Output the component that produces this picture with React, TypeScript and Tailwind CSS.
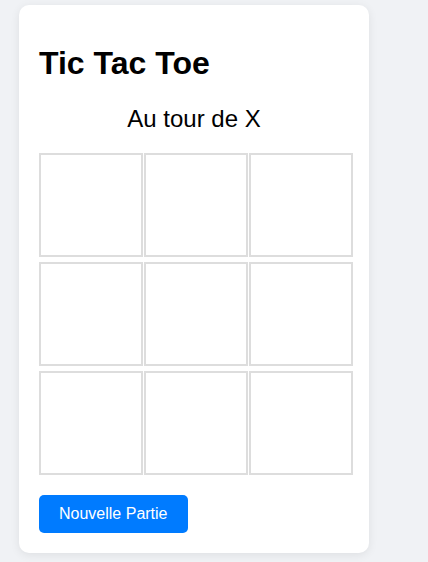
import { useState } from "react";

type Cell = "X" | "O" | null;

const App = () => {
  const [board, setBoard] = useState<Cell[]>(Array(9).fill(null));
  const [xTurn, setXTurn] = useState(true);

  const play = (i: number) => {
    if (board[i]) return;
    const next = [...board];
    next[i] = xTurn ? "X" : "O";
    setBoard(next);
    setXTurn(!xTurn);
  };

  const reset = () => {
    setBoard(Array(9).fill(null));
    setXTurn(true);
  };

  return (
    <div
      className="min-h-[562px] bg-[#f0f2f5] pl-[19px] pt-[5px]"
      style={{ fontFamily: '"Liberation Sans", Arial, sans-serif' }}
    >
      <div className="w-[350px] rounded-[10px] bg-white px-[20px] pt-[20px] pb-[20px] shadow-[0_2px_10px_rgba(0,0,0,0.08)]">
        <h1 className="mt-[20px] text-[32px] leading-[36px] font-bold text-black">
          Tic Tac Toe
        </h1>
        <p className="mt-[24px] text-center text-[24px] leading-[28px] text-black">
          Au tour de {xTurn ? "X" : "O"}
        </p>
        <div className="mt-[20px] grid w-[314px] grid-cols-[repeat(3,104px)] gap-x-[1px] gap-y-[5px]">
          {board.map((cell, i) => (
            <button
              key={i}
              onClick={() => play(i)}
              className="flex h-[104px] w-[104px] items-center justify-center border-2 border-[#dddddd] bg-white text-[48px] font-bold text-black"
            >
              {cell}
            </button>
          ))}
        </div>
        <button
          onClick={reset}
          className="mt-[20px] rounded-[5px] bg-[#007bff] px-[20px] py-[10px] text-[16px] leading-[18px] text-white"
        >
          Nouvelle Partie
        </button>
      </div>
    </div>
  );
};

export default App;
